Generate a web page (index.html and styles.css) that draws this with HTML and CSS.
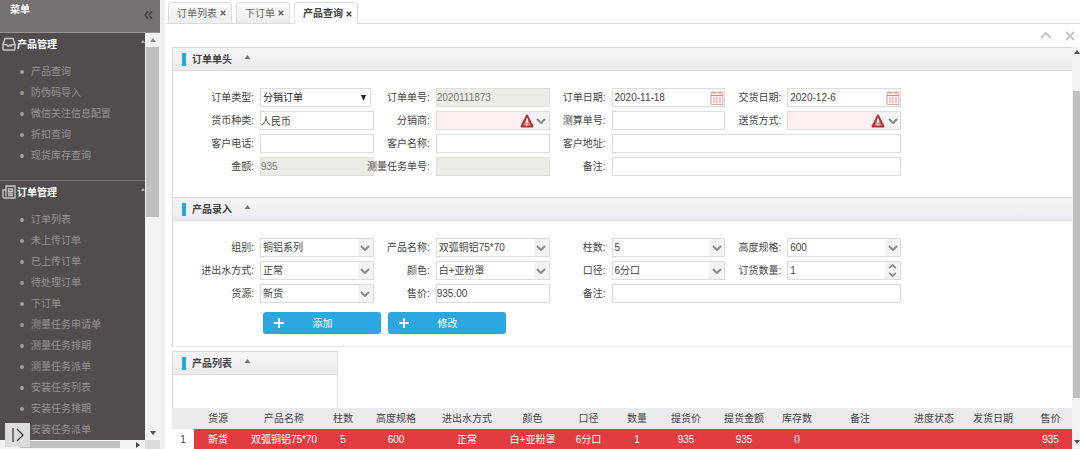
FILE: index.html
```html
<!DOCTYPE html>
<html lang="zh-CN">
<head>
  <meta charset="UTF-8" />
  <meta name="viewport" content="width=device-width, initial-scale=1.0" />
  <title>产品查询</title>
  <link rel="stylesheet" href="styles.css">
</head>
<body>

  <!-- Shared icons -->
  <svg class="sprite" aria-hidden="true">
    <symbol id="chevron" viewBox="0 0 10 6"><path d="M1 1l4 4 4-4" fill="none" stroke="currentColor" stroke-width="2" /></symbol>
    <symbol id="tri-up" viewBox="0 0 6 4"><path d="M0 4l3-4 3 4z" fill="currentColor" /></symbol>
    <symbol id="tri-down" viewBox="0 0 6 4"><path d="M0 0l3 4 3-4z" fill="currentColor" /></symbol>
    <symbol id="cross" viewBox="0 0 8 8"><path d="M1 1l6 6M7 1l-6 6" fill="none" stroke="currentColor" stroke-width="2" /></symbol>
    <symbol id="plus" viewBox="0 0 10 10"><path d="M5 0v10M0 5h10" fill="none" stroke="currentColor" stroke-width="2" /></symbol>
    <symbol id="calendar" viewBox="0 0 14 14">
      <path d="M1 1.500h12v12h-12z" fill="#fdeceb" stroke="#eda09c" />
      <path d="M1 4.500h12M4 0v3M10 0v3" stroke="#e8837e" fill="none" />
      <path d="M3 7h8M3 9h8M3 11h8" stroke="#eda09c" stroke-dasharray="2 1" />
    </symbol>
    <symbol id="warning" viewBox="0 0 14 14">
      <path d="M7 1.500L12.500 12.500h-11z" fill="#d98a85" stroke="#a93632" stroke-width="2" stroke-linejoin="round" />
      <path d="M7 4.500v4.500M7 10v1.500" stroke="#fff" stroke-width="1.500" />
    </symbol>
  </svg>

  <div class="app">
    <aside class="sidebar">
      <header class="sidebar-header">
        <h1>菜单</h1>
        <button class="collapse" aria-label="折叠菜单">
          <svg width="9" height="8" viewBox="0 0 9 8"><path d="M4 0L1 4l3 4M8 0L5 4l3 4" fill="none" stroke="currentColor" stroke-width="1.400" /></svg>
        </button>
      </header>

      <div class="sidebar-body">
        <nav class="menu">
          <section class="menu-group">
            <h2>
              <svg width="14" height="14" viewBox="0 0 14 14" fill="none" stroke="#c9c6c7"><path d="M3 1.500h8l2 6v4.500q0 1-1 1H2q-1 0-1-1V7.500zM1 7.500h3q1 0 1.500 1.200t1.500 0t1.500 0t1.500-1.200H13" stroke-width="1.500" /></svg>
              产品管理
              <svg class="mark" width="4" height="3"><use href="#tri-up" /></svg>
            </h2>
            <ul>
              <li><a href="#">产品查询</a></li>
              <li><a href="#">防伪码导入</a></li>
              <li><a href="#">微信关注信息配置</a></li>
              <li><a href="#">折扣查询</a></li>
              <li><a href="#">现货库存查询</a></li>
            </ul>
          </section>
          <section class="menu-group">
            <h2>
              <svg width="14" height="14" viewBox="0 0 14 14" fill="none" stroke="#c9c6c7"><path d="M4 1h9v12H2.500Q1 13 1 11.500V5h3zM4 5v6.500M6.500 4h4v2.500h-4zM6 8.500h5M6 10.500h5" stroke-width="1.300" /></svg>
              订单管理
              <svg class="mark" width="4" height="3"><use href="#tri-up" /></svg>
            </h2>
            <ul>
              <li><a href="#">订单列表</a></li>
              <li><a href="#">未上传订单</a></li>
              <li><a href="#">已上传订单</a></li>
              <li><a href="#">待处理订单</a></li>
              <li><a href="#">下订单</a></li>
              <li><a href="#">测量任务申请单</a></li>
              <li><a href="#">测量任务排期</a></li>
              <li><a href="#">测量任务派单</a></li>
              <li><a href="#">安装任务列表</a></li>
              <li><a href="#">安装任务排期</a></li>
              <li><a href="#">安装任务派单</a></li>
            </ul>
          </section>
        </nav>
        <div class="scroll-v">
          <svg width="6" height="4"><use href="#tri-up" /></svg>
          <div class="thumb"></div>
          <svg class="end" width="6" height="4"><use href="#tri-down" /></svg>
        </div>
      </div>

      <div class="scroll-h">
        <div class="track">
          <div class="thumb"></div>
          <svg width="4" height="6" viewBox="0 0 4 6"><path d="M0 0l4 3-4 3z" fill="#444" /></svg>
        </div>
      </div>

      <button class="expand" aria-label="展开">
        <svg width="14" height="14" viewBox="0 0 14 14"><path d="M2 0v14M6 1l6 6-6 6" fill="none" stroke="#333" stroke-width="1.200" /></svg>
      </button>
    </aside>

    <main class="main">
      <div class="tabs">
        <div class="tab"><a href="#">订单列表</a><button aria-label="关闭"><svg width="6" height="6"><use href="#cross" /></svg></button></div>
        <div class="tab"><a href="#">下订单</a><button aria-label="关闭"><svg width="6" height="6"><use href="#cross" /></svg></button></div>
        <div class="tab active"><a href="#">产品查询</a><button aria-label="关闭"><svg width="6" height="6"><use href="#cross" /></svg></button></div>
      </div>

      <div class="tools">
        <button aria-label="收起"><svg width="12" height="7" viewBox="0 0 12 7"><path d="M1 6l5-5 5 5" fill="none" stroke="currentColor" stroke-width="2" /></svg></button>
        <button aria-label="关闭"><svg width="10" height="10" viewBox="0 0 10 10"><path d="M1 1l8 8M9 1l-8 8" fill="none" stroke="currentColor" stroke-width="2" /></svg></button>
      </div>

      <div class="page">
        <div class="content">

          <!-- Order header -->
          <section class="panel">
            <h2 class="panel-title">订单单头 <svg width="7" height="4"><use href="#tri-up" /></svg></h2>
            <form class="form">
              <div class="field">
                <label for="type">订单类型:</label>
                <div class="box native"><select id="type"><option>分销订单</option></select><svg width="5" height="6" viewBox="0 0 5 6"><path d="M0 0h5L2.500 6z" fill="currentColor" /></svg></div>
              </div>
              <div class="field">
                <label for="orderNo">订单单号:</label>
                <input class="box" id="orderNo" type="text" value="2020111873" disabled>
              </div>
              <div class="field">
                <label for="orderDate">订单日期:</label>
                <div class="box"><input id="orderDate" type="text" value="2020-11-18"><svg width="14" height="14"><use href="#calendar" /></svg></div>
              </div>
              <div class="field">
                <label for="sendDate">交货日期:</label>
                <div class="box"><input id="sendDate" type="text" value="2020-12-6"><svg width="14" height="14"><use href="#calendar" /></svg></div>
              </div>

              <div class="field">
                <label for="currency">货币种类:</label>
                <input class="box" id="currency" type="text" value="人民币">
              </div>
              <div class="field">
                <label for="dealer">分销商:</label>
                <div class="box invalid"><select id="dealer"><option></option></select><svg width="14" height="14"><use href="#warning" /></svg><span class="arrow"><svg width="10" height="6"><use href="#chevron" /></svg></span></div>
              </div>
              <div class="field">
                <label for="calcNo">测算单号:</label>
                <input class="box" id="calcNo" type="text">
              </div>
              <div class="field">
                <label for="delivery">送货方式:</label>
                <div class="box invalid"><select id="delivery"><option></option></select><svg width="14" height="14"><use href="#warning" /></svg><span class="arrow"><svg width="10" height="6"><use href="#chevron" /></svg></span></div>
              </div>

              <div class="field">
                <label for="phone">客户电话:</label>
                <input class="box" id="phone" type="text">
              </div>
              <div class="field">
                <label for="customer">客户名称:</label>
                <input class="box" id="customer" type="text">
              </div>
              <div class="field wide">
                <label for="address">客户地址:</label>
                <input class="box" id="address" type="text">
              </div>

              <div class="field">
                <label for="amount">金额:</label>
                <input class="box" id="amount" type="text" value="935" disabled>
              </div>
              <div class="field">
                <label for="taskNo">测量任务单号:</label>
                <input class="box" id="taskNo" type="text" disabled>
              </div>
              <div class="field wide">
                <label for="remark">备注:</label>
                <input class="box" id="remark" type="text">
              </div>
            </form>
          </section>

          <!-- Product entry -->
          <section class="panel">
            <h2 class="panel-title">产品录入 <svg width="7" height="4"><use href="#tri-up" /></svg></h2>
            <form class="form entry">
              <div class="field">
                <label for="group">组别:</label>
                <div class="box"><select id="group"><option>铜铝系列</option></select><span class="arrow"><svg width="10" height="6"><use href="#chevron" /></svg></span></div>
              </div>
              <div class="field">
                <label for="product">产品名称:</label>
                <div class="box"><select id="product"><option>双弧铜铝75*70</option></select><span class="arrow"><svg width="10" height="6"><use href="#chevron" /></svg></span></div>
              </div>
              <div class="field">
                <label for="columns">柱数:</label>
                <div class="box"><select id="columns"><option>5</option></select><span class="arrow"><svg width="10" height="6"><use href="#chevron" /></svg></span></div>
              </div>
              <div class="field">
                <label for="height">高度规格:</label>
                <div class="box"><select id="height"><option>600</option></select><span class="arrow"><svg width="10" height="6"><use href="#chevron" /></svg></span></div>
              </div>

              <div class="field">
                <label for="water">进出水方式:</label>
                <div class="box"><select id="water"><option>正常</option></select><span class="arrow"><svg width="10" height="6"><use href="#chevron" /></svg></span></div>
              </div>
              <div class="field">
                <label for="color">颜色:</label>
                <div class="box"><select id="color"><option>白+亚粉罩</option></select><span class="arrow"><svg width="10" height="6"><use href="#chevron" /></svg></span></div>
              </div>
              <div class="field">
                <label for="caliber">口径:</label>
                <div class="box"><select id="caliber"><option>6分口</option></select><span class="arrow"><svg width="10" height="6"><use href="#chevron" /></svg></span></div>
              </div>
              <div class="field">
                <label for="quantity">订货数量:</label>
                <div class="box"><input id="quantity" type="number" value="1"><span class="arrow spin"><svg class="up" width="9" height="5"><use href="#chevron" /></svg><svg width="9" height="5"><use href="#chevron" /></svg></span></div>
              </div>

              <div class="field">
                <label for="source">货源:</label>
                <div class="box"><select id="source"><option>新货</option></select><span class="arrow"><svg width="10" height="6"><use href="#chevron" /></svg></span></div>
              </div>
              <div class="field">
                <label for="price">售价:</label>
                <input class="box" id="price" type="text" value="935.00">
              </div>
              <div class="field wide">
                <label for="note">备注:</label>
                <input class="box" id="note" type="text">
              </div>

              <div class="actions">
                <button type="button"><svg width="10" height="10"><use href="#plus" /></svg><span>添加</span></button>
                <button type="button"><svg width="10" height="10"><use href="#plus" /></svg><span>修改</span></button>
              </div>
            </form>
          </section>

          <!-- Product list -->
          <section class="panel list-panel">
            <h2 class="panel-title">产品列表 <svg width="7" height="4"><use href="#tri-up" /></svg></h2>
          </section>
          <table class="grid">
            <colgroup>
              <col><col><col><col><col><col><col><col><col><col><col><col><col><col><col><col>
            </colgroup>
            <thead>
              <tr>
                <th></th><th>货源</th><th>产品名称</th><th>柱数</th><th>高度规格</th><th>进出水方式</th><th>颜色</th><th>口径</th>
                <th>数量</th><th>提货价</th><th>提货金额</th><th>库存数</th><th>备注</th><th>进度状态</th><th>发货日期</th><th>售价</th>
              </tr>
            </thead>
            <tbody>
              <tr class="selected">
                <td>1</td><td>新货</td><td>双弧铜铝75*70</td><td>5</td><td>600</td><td>正常</td><td>白+亚粉罩</td><td>6分口</td>
                <td>1</td><td>935</td><td>935</td><td>0</td><td></td><td></td><td></td><td>935</td>
              </tr>
            </tbody>
          </table>
        </div>

        <div class="scroll-v page-scroll">
          <svg width="6" height="4"><use href="#tri-up" /></svg>
          <div class="thumb"></div>
          <svg class="end" width="6" height="4"><use href="#tri-down" /></svg>
        </div>
      </div>
    </main>
  </div>

</body>
</html>
```

FILE: styles.css
```css
* {
  box-sizing: border-box;
}

body {
  margin: 0;
  font-family: "Liberation Sans", "Noto Sans CJK SC", sans-serif;
  font-size: 10px;
  line-height: 15px;
  color: #444;
  background: #fff;
}

h1, h2, ul {
  margin: 0;
  padding: 0;
  font-size: 10px;
}

button, input, select {
  font: inherit;
  color: inherit;
  margin: 0;
  padding: 0;
  border: none;
  border-radius: 0;
  background: none;
}

button {
  cursor: pointer;
}

a {
  color: inherit;
  text-decoration: none;
}

svg {
  flex: none;
}

.sprite {
  display: none;
}

.app {
  display: flex;
  height: 100vh;
  overflow: hidden;
}

/* Sidebar */
.sidebar {
  position: relative;
  display: flex;
  flex-direction: column;
  flex: none;
  width: 160px;
  background: #514d4f;
}

.sidebar-header {
  display: flex;
  justify-content: space-between;
  flex: none;
  height: 33px;
  padding: 2px 7px 0 10px;
  color: #fff;
  background: #757071;
  border-bottom: 1px solid #989495;
}

.collapse {
  align-self: flex-start;
  margin-top: 6px;
  color: #3f3b3d;
}

.sidebar-body {
  display: flex;
  flex: 1;
  min-height: 0;
}

.menu {
  flex: 1;
  overflow: hidden;
}

.menu-group {
  border-bottom: 1px solid #777374;
}

.menu h2 {
  display: flex;
  align-items: center;
  gap: 1px;
  height: 22px;
  padding-left: 2px;
  color: #fff;
}

.menu .mark {
  align-self: flex-start;
  margin: 7px 0 0 auto;
  color: #c9c6c7;
}

.menu ul {
  padding: 6px 0 14px 20px;
  list-style: none;
}

.menu li {
  display: flex;
  align-items: center;
  gap: 7px;
  height: 21px;
  color: #979394;
}

.menu li::before {
  content: "";
  width: 4px;
  height: 4px;
  border-radius: 50%;
  background: #a19e9f;
}

.scroll-v {
  display: flex;
  flex-direction: column;
  align-items: center;
  width: 15px;
  padding: 5px 1px;
  color: #8a8a8a;
  background: #f2f1f3;
}

.scroll-v .thumb {
  width: 100%;
  height: 170px;
  margin-top: 5px;
  background: #c0bfc1;
}

.scroll-v .end {
  margin-top: auto;
  color: #505050;
}

.scroll-h {
  flex: none;
  height: 9px;
  padding-right: 15px;
  background: #dcdcdc;
}

.track {
  display: flex;
  align-items: center;
  justify-content: space-between;
  height: 100%;
  padding: 0 5px 0 20px;
  background: #f2f1f3;
}

.track .thumb {
  width: 100px;
  height: 7px;
  background: #c0bfc1;
}

.expand {
  position: absolute;
  left: 5px;
  bottom: 2px;
  display: flex;
  align-items: center;
  justify-content: center;
  width: 25px;
  height: 24px;
  background: #dcdcdc;
}

/* Main area */
.main {
  display: flex;
  flex-direction: column;
  flex: 1;
  min-width: 0;
  padding-left: 5px;
  background: linear-gradient(to right, #efeff1 5px, #fff 5px);
}

.tabs {
  display: flex;
  gap: 4px;
  flex: none;
  height: 24px;
  padding: 2px 3px 0;
  border-bottom: 1px solid #dcdcdc;
}

.tab {
  display: flex;
  align-items: center;
  gap: 3px;
  padding: 0 5px 0 8px;
  color: #666;
  background: linear-gradient(#fbfbfb, #ececec);
  border: 1px solid #dcdcdc;
  border-bottom: none;
  border-radius: 4px 4px 0 0;
}

.tab button {
  display: flex;
}

.tab.active {
  height: 22px;
  font-weight: bold;
  color: #444;
  background: #fff;
}

.tools {
  display: flex;
  align-items: center;
  justify-content: flex-end;
  gap: 13px;
  flex: none;
  height: 23px;
  padding-right: 5px;
  color: #c8c8c8;
}

.tools button {
  display: flex;
}

.page {
  display: flex;
  flex: 1;
  min-height: 0;
  padding-left: 7px;
}

.content {
  flex: 1;
  min-width: 0;
  overflow: hidden;
}

.page-scroll {
  width: 8px;
  padding: 3px 0 5px 1px;
  color: #505050;
}

.page-scroll .thumb {
  height: 307px;
  margin-top: 37px;
}

.panel {
  border-left: 1px solid #dcdcdc;
}

.panel-title {
  display: flex;
  align-items: center;
  height: 24px;
  padding-left: 9px;
  background: linear-gradient(#f5f4f6, #ececee);
  border-top: 1px solid #d8d8d8;
  border-bottom: 1px solid #dcdcdc;
}

.panel-title::before {
  content: "";
  width: 4px;
  height: 13px;
  margin-right: 6px;
  background: #1fa9e1;
}

.panel-title svg {
  align-self: flex-start;
  margin: 7px 0 0 12px;
  color: #777;
}

.form {
  display: grid;
  grid-template-columns: repeat(4, 1fr);
  gap: 4px 0;
  padding: 17px 171px 21px 25px;
}

.field {
  display: flex;
  align-items: center;
  min-width: 0;
}

.wide {
  grid-column: span 2;
}

.field label {
  display: flex;
  justify-content: flex-end;
  flex: none;
  width: 62px;
  padding-right: 6px;
  white-space: nowrap;
}

.box {
  display: flex;
  align-items: center;
  flex: 1;
  min-width: 0;
  height: 19px;
  border: 1px solid #dcdcdc;
  background: #fff;
}

.box input, .box select {
  flex: 1;
  min-width: 0;
  height: 17px;
  padding-left: 2px;
  appearance: none;
  outline: none;
}

.box input[type="number"] {
  appearance: textfield;
}

.box input[type="number"]::-webkit-inner-spin-button {
  display: none;
}

.box:disabled {
  color: #777;
  background: #ebebe7;
  border-color: #dfdfda;
}

.native {
  margin-right: 3px;
  padding-right: 4px;
  color: #222;
}

.invalid {
  background: #fdf0f0;
}

.arrow {
  display: flex;
  flex-direction: column;
  align-items: center;
  justify-content: center;
  gap: 3px;
  width: 15px;
  height: 17px;
  color: #888;
  background: #f3f3f3;
}

.spin .up {
  transform: rotate(180deg);
}

.entry {
  padding-bottom: 12px;
  border-bottom: 1px solid #e8e8e8;
}

.actions {
  display: flex;
  grid-column: 1 / -1;
  gap: 7px;
  padding: 5px 0 0 65px;
}

.actions button {
  display: flex;
  align-items: center;
  width: 118px;
  height: 22px;
  padding: 0 20px 0 11px;
  color: #fff;
  background: #2da7df;
  border-radius: 3px;
}

.actions span {
  flex: 1;
  text-align: center;
}

.list-panel {
  width: 166px;
  height: 57px;
  margin-top: 4px;
  border-right: 1px solid #dcdcdc;
}

/* Product table */
.grid {
  width: 100%;
  table-layout: fixed;
  border-collapse: collapse;
  text-align: center;
}

.grid th, .grid td {
  padding: 0;
  white-space: nowrap;
}

.grid th {
  height: 21px;
  font-weight: normal;
  background: #ebeaec;
}

.grid td {
  height: 20px;
}

.grid th:last-child, .grid td:last-child {
  padding-left: 9px;
}

.selected td {
  color: #fff;
  background: #e13c3f;
}

.selected td:first-child {
  color: #444;
  background: #fff;
}

col:nth-child(1) { width: 22px; }
col:nth-child(2) { width: 48px; }
col:nth-child(3) { width: 84px; }
col:nth-child(4) { width: 34px; }
col:nth-child(5) { width: 72px; }
col:nth-child(6) { width: 70px; }
col:nth-child(7) { width: 61px; }
col:nth-child(8) { width: 51px; }
col:nth-child(9) { width: 46px; }
col:nth-child(10) { width: 52px; }
col:nth-child(11) { width: 64px; }
col:nth-child(12) { width: 42px; }
col:nth-child(13) { width: 84px; }
col:nth-child(14) { width: 64px; }
col:nth-child(15) { width: 54px; }
```
